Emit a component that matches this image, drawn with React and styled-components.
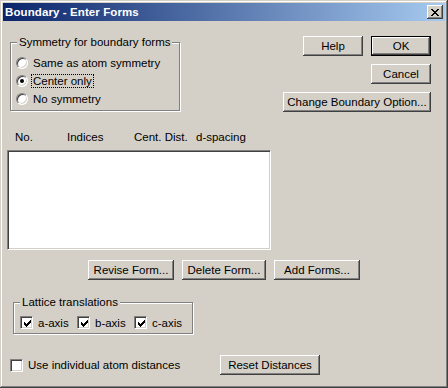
import React from 'react';
import styled, { createGlobalStyle } from 'styled-components';

const face = '#d4d0c8';
const shadow = '#808080';
const dark = '#404040';

const Global = createGlobalStyle`
    html, body {
        margin: 0;
        background: ${face};
    }
    body {
        font-family: 'Liberation Sans', Arial, sans-serif;
        font-size: 11.5px;
        color: #000;
    }
`;

const Window = styled.div`
    width: 448px;
    height: 388px;
    box-sizing: border-box;
    padding: 3px;
    background: ${face};
    box-shadow: inset -1px -1px 0 ${dark}, inset 1px 1px 0 ${face},
        inset -2px -2px 0 ${shadow}, inset 2px 2px 0 #fff;
    display: flex;
    flex-direction: column;
`;

const TitleBar = styled.div`
    height: 18px;
    display: flex;
    align-items: center;
    justify-content: space-between;
    padding-left: 2px;
    padding-right: 2px;
    background: linear-gradient(to right, #0a246a, #a6caf0);
    color: #fff;
    font-weight: bold;
    font-size: 11.5px;
    letter-spacing: 0.1px;
`;

const CloseButton = styled.div`
    width: 16px;
    height: 14px;
    box-sizing: border-box;
    display: flex;
    align-items: center;
    justify-content: center;
    background: ${face};
    box-shadow: inset -1px -1px 0 ${dark}, inset 1px 1px 0 #fff,
        inset -2px -2px 0 ${shadow}, inset 2px 2px 0 ${face};
`;

const Body = styled.div`
    flex: 1;
    display: flex;
    flex-direction: column;
    padding: 0 14px 0 4px;
`;

const TopRow = styled.div`
    display: flex;
    justify-content: space-between;
    align-items: flex-start;
    padding-top: 15px;
`;

const Group = styled.div`
    position: relative;
    box-sizing: border-box;
    width: ${p => p.$width}px;
    margin-top: ${p => p.$top}px;
    margin-left: ${p => p.$left}px;
    padding: ${p => p.$pad};
    border: 1px solid ${shadow};
    box-shadow: 1px 1px 0 #fff, inset 1px 1px 0 #fff;
`;

const GroupLabel = styled.span`
    position: absolute;
    top: -8px;
    left: 6px;
    padding: 0 2px;
    line-height: 14px;
    background: ${face};
`;

const RadioRow = styled.label`
    display: flex;
    align-items: center;
    gap: 5px;
    height: 18px;
    padding-left: 5px;
`;

const RadioCircle = styled.span`
    position: relative;
    flex: none;
    width: 12px;
    height: 12px;
    box-sizing: border-box;
    border-radius: 50%;
    border: 1px solid;
    border-color: ${shadow} #fff #fff ${shadow};
    background: #fff;
    box-shadow: inset 1px 1px 0 ${dark}, inset -1px -1px 0 ${face};

    &::after {
        content: '';
        display: ${p => (p.$checked ? 'block' : 'none')};
        position: absolute;
        left: 3px;
        top: 3px;
        width: 4px;
        height: 4px;
        border-radius: 50%;
        background: #000;
    }
`;

const FocusText = styled.span`
    outline: 1px dotted #000;
    outline-offset: 0;
    padding: 0 1px;
    margin-left: -1px;
    line-height: 12px;
`;

const RightCol = styled.div`
    display: flex;
    flex-direction: column;
    align-items: flex-end;
    gap: 8px;
`;

const ButtonPair = styled.div`
    display: flex;
    gap: 8px;
`;

const Button = styled.button`
    width: ${p => p.$width}px;
    height: 20px;
    padding: 0;
    box-sizing: border-box;
    font: inherit;
    color: #000;
    background: ${face};
    border: ${p => (p.$default ? '1px solid #000' : 'none')};
    box-shadow: inset -1px -1px 0 ${dark}, inset 1px 1px 0 #fff,
        inset -2px -2px 0 ${shadow}, inset 2px 2px 0 ${face};
`;

const Headers = styled.div`
    display: grid;
    grid-template-columns: 52px 67px 62px auto;
    margin-top: 18px;
    padding-left: 8px;
    line-height: 14px;
`;

const ListBox = styled.div`
    margin-top: 6px;
    width: 264px;
    height: 100px;
    box-sizing: border-box;
    background: #fff;
    border: 1px solid;
    border-color: ${shadow} #fff #fff ${shadow};
    box-shadow: inset 1px 1px 0 ${dark}, inset -1px -1px 0 ${face};
`;

const ButtonRow = styled.div`
    display: flex;
    gap: 8px;
    margin-top: 10px;
    padding-left: 81px;
`;

const CheckRow = styled.div`
    display: grid;
    grid-template-columns: 57px 57px 57px;
    padding-left: 6px;
`;

const CheckItem = styled.label`
    display: flex;
    align-items: center;
    gap: 5px;
    height: 13px;
    width: ${p => (p.$width ? `${p.$width}px` : 'auto')};
    padding-left: ${p => p.$left || 0}px;
    box-sizing: border-box;
`;

const CheckBox = styled.span`
    flex: none;
    width: 13px;
    height: 13px;
    box-sizing: border-box;
    display: flex;
    align-items: center;
    justify-content: center;
    background: #fff;
    border: 1px solid;
    border-color: ${shadow} #fff #fff ${shadow};
    box-shadow: inset 1px 1px 0 ${dark}, inset -1px -1px 0 ${face};

    svg {
        display: ${p => (p.$checked ? 'block' : 'none')};
        margin: 1px 0 0 1px;
    }
`;

const BottomRow = styled.div`
    display: flex;
    align-items: center;
    margin-top: 21px;
`;

const checkStarts = [2, 3, 4, 3, 2, 1, 0];

const CheckMark = () => (
    <svg width="7" height="7" viewBox="0 0 7 7" shapeRendering="crispEdges">
        {checkStarts.map((y, x) => (
            <rect key={x} x={x} y={y} width="1" height="3" fill="#000" />
        ))}
    </svg>
);

const closeRows = [[0, 2, 6, 2], [1, 2, 5, 2], [2, 4], [3, 2], [2, 4], [1, 2, 5, 2], [0, 2, 6, 2]];

const CloseGlyph = () => (
    <svg width="8" height="7" viewBox="0 0 8 7" shapeRendering="crispEdges">
        {closeRows.map((row, y) => {
            const rects = [];
            for (let i = 0; i < row.length; i += 2) {
                rects.push(<rect key={`${y}-${i}`} x={row[i]} y={y} width={row[i + 1]} height="1" fill="#000" />);
            }
            return rects;
        })}
    </svg>
);

const Check = ({ checked, children, width, left }) => (
    <CheckItem $width={width} $left={left}>
        <CheckBox $checked={checked}><CheckMark /></CheckBox>
        <span>{children}</span>
    </CheckItem>
);

export default () => {
    return (
        <>
            <Global />
            <Window>
                <TitleBar>
                    <span>Boundary - Enter Forms</span>
                    <CloseButton><CloseGlyph /></CloseButton>
                </TitleBar>
                <Body>
                    <TopRow>
                        <Group $width={170} $top={6} $left={3} $pad="11px 0 2px 0">
                            <GroupLabel>Symmetry for boundary forms</GroupLabel>
                            <RadioRow><RadioCircle /><span>Same as atom symmetry</span></RadioRow>
                            <RadioRow><RadioCircle $checked /><FocusText>Center only</FocusText></RadioRow>
                            <RadioRow><RadioCircle /><span>No symmetry</span></RadioRow>
                        </Group>
                        <RightCol>
                            <ButtonPair>
                                <Button $width={60}>Help</Button>
                                <Button $width={60} $default>OK</Button>
                            </ButtonPair>
                            <Button $width={60}>Cancel</Button>
                            <Button $width={148}>Change Boundary Option...</Button>
                        </RightCol>
                    </TopRow>
                    <Headers>
                        <span>No.</span>
                        <span>Indices</span>
                        <span>Cent. Dist.</span>
                        <span>d-spacing</span>
                    </Headers>
                    <ListBox />
                    <ButtonRow>
                        <Button $width={86}>Revise Form...</Button>
                        <Button $width={84}>Delete Form...</Button>
                        <Button $width={86}>Add Forms...</Button>
                    </ButtonRow>
                    <Group $width={180} $top={22} $left={6} $pad="13px 0 4px 0">
                        <GroupLabel>Lattice translations</GroupLabel>
                        <CheckRow>
                            <Check checked>a-axis</Check>
                            <Check checked>b-axis</Check>
                            <Check checked>c-axis</Check>
                        </CheckRow>
                    </Group>
                    <BottomRow>
                        <Check width={213} left={3}>Use individual atom distances</Check>
                        <Button $width={100}>Reset Distances</Button>
                    </BottomRow>
                </Body>
            </Window>
        </>
    );
};
